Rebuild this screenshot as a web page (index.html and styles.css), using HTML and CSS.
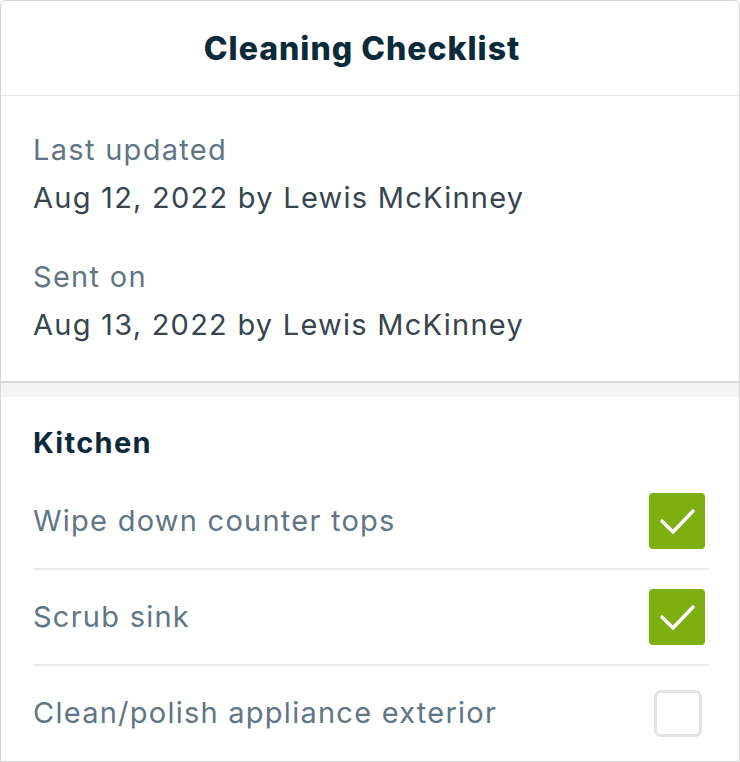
FILE: index.html
```html
<!DOCTYPE html>
<html lang="en">
<head>
<meta charset="utf-8">
<title>Cleaning Checklist</title>
<link rel="stylesheet" href="styles.css">
</head>
<body>
<div class="card">
  <header class="card-header">
    <h1 class="title">Cleaning Checklist</h1>
  </header>
  <section class="info">
    <div class="info-group">
      <div class="info-label">Last updated</div>
      <div class="info-value">Aug 12, 2022 by Lewis McKinney</div>
    </div>
    <div class="info-group">
      <div class="info-label">Sent on</div>
      <div class="info-value">Aug 13, 2022 by Lewis McKinney</div>
    </div>
  </section>
  <div class="band"></div>
  <section class="list">
    <h2 class="list-title">Kitchen</h2>
    <div class="row">
      <span class="row-text">Wipe down counter tops</span>
      <span class="box-wrap"><span class="box checked"><svg viewBox="0 0 56 56" width="56" height="56"><path d="M13 28 L24 39 L44 18" fill="none" stroke="#fff" stroke-width="3.5" stroke-linecap="round" stroke-linejoin="round"/></svg></span></span>
    </div>
    <div class="row">
      <span class="row-text">Scrub sink</span>
      <span class="box-wrap"><span class="box checked"><svg viewBox="0 0 56 56" width="56" height="56"><path d="M13 28 L24 39 L44 18" fill="none" stroke="#fff" stroke-width="3.5" stroke-linecap="round" stroke-linejoin="round"/></svg></span></span>
    </div>
    <div class="row last">
      <span class="row-text">Clean/polish appliance exterior</span>
      <span class="box-wrap"><span class="box empty"></span></span>
    </div>
  </section>
</div>
</body>
</html>
```

FILE: styles.css
```css
html, body {
  margin: 0;
  padding: 0;
  background: #ffffff;
}
body {
  font-family: Inter, "Liberation Sans", sans-serif;
}
.card {
  box-sizing: border-box;
  width: 740px;
  height: 762px;
  border: 1px solid #d6d6d6;
  border-radius: 6px 6px 0 0;
  overflow: hidden;
  background: #fff;
}
.card-header {
  height: 94px;
  border-bottom: 1px solid #e6e6e6;
  display: flex;
  align-items: center;
  justify-content: center;
  padding-right: 16px;
}
.title {
  margin: 0;
  font-size: 32px;
  font-weight: 800;
  letter-spacing: 1px;
  color: #0b2a3a;
  line-height: 40px;
  padding-top: 2px;
}
.info {
  padding: 34px 32px 36px 32px;
  border-bottom: 2px solid #d9d9d9;
}
.info-group + .info-group {
  margin-top: 39px;
}
.info-label {
  font-size: 29px;
  line-height: 40px;
  letter-spacing: 1.3px;
  color: #617584;
}
.info-value {
  font-size: 29px;
  line-height: 40px;
  letter-spacing: 1.25px;
  color: #36454f;
  margin-top: 8px;
}
.band {
  height: 14px;
  background: #f3f3f3;
}
.list {
  padding: 26px 30px 0 32px;
}
.list-title {
  margin: 0 0 11px 0;
  font-size: 29px;
  line-height: 40px;
  font-weight: 700;
  letter-spacing: 1.3px;
  color: #0d2a3a;
}
.row {
  display: flex;
  align-items: center;
  justify-content: space-between;
  height: 94px;
  border-bottom: 2px solid #ececec;
}
.row.last {
  border-bottom: none;
}
.row-text {
  font-size: 29px;
  line-height: 40px;
  letter-spacing: 1.25px;
  color: #617584;
}
.box-wrap {
  width: 56px;
  height: 56px;
  margin-right: 4px;
  display: flex;
  align-items: center;
  justify-content: center;
}
.box {
  box-sizing: border-box;
  display: block;
}
.box.checked {
  width: 56px;
  height: 56px;
  background: #7fae10;
  border-radius: 4px;
}
.box.checked svg {
  display: block;
}
.box.empty {
  width: 48px;
  height: 47px;
  margin-left: 2px;
  border: 3px solid #e3e3e3;
  border-radius: 7px;
}
```
